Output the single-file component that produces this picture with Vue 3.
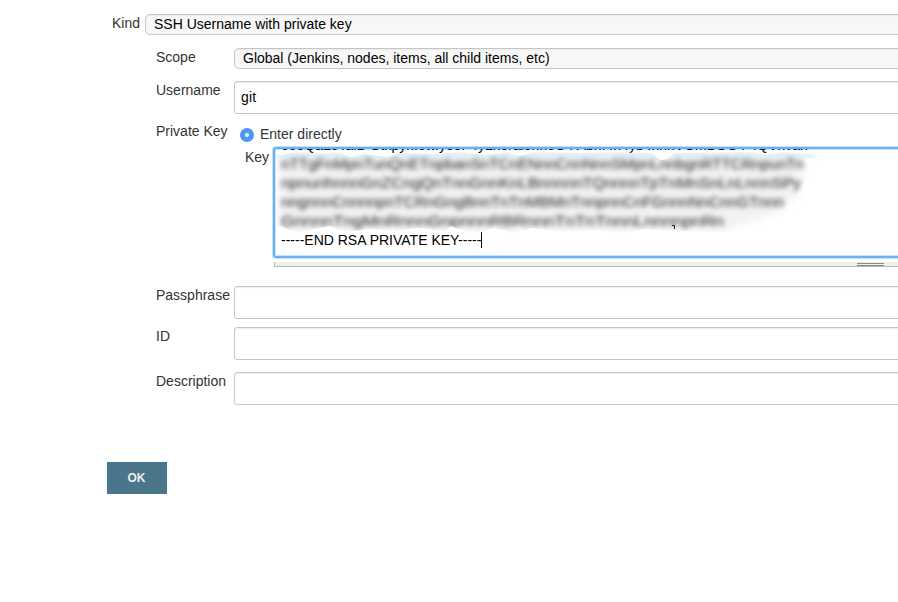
<script setup>
import { ref } from 'vue'

const username = ref('git')
const clippedLine = 'ooeQaLoTalB Otkpyn.ow.yoor 4yLnoralonnoO4 Abn.4n4yb4nnnVOmBOO4 4QVnvan'
// Placeholder lines, always shown obscured
const hiddenLines = [
  { text: 'nTTgFnMpnTunQnETnpbanSnTCnENnnCnnNnnSMpnLnnbgnRTTCRnpunTn', width: 523 },
  { text: 'npnunhnnnGnZCngQnTnnGnnKnLBnnnnnTQnnnnTpTnMnSnLnLnnnSPy', width: 520 },
  { text: 'nngnnnCnnnnpnTCRnGngBnnTnTnMBMnTnnpnnCnFGnnnNnCnnGTnnn', width: 503 },
  { text: 'GnnnnTngMnRnnnGnpnnnRBRnnnTnTnTnnnLnnnnpnRn', width: 443 },
]
</script>

<template>
  <main class="page">
    <div class="row kind">
      <label>Kind</label>
      <div class="select"><span>SSH Username with private key</span></div>
    </div>
    <div class="row scope">
      <label>Scope</label>
      <div class="select"><span>Global (Jenkins, nodes, items, all child items, etc)</span></div>
    </div>
    <div class="row username">
      <label>Username</label>
      <input v-model="username" class="field" type="text" />
    </div>
    <div class="row private">
      <label>Private Key</label>
      <div class="choice">
        <div class="option"><span class="radio"></span><span class="option-text">Enter directly</span></div>
        <div class="key-row">
          <label>Key</label>
          <div class="key-wrap">
            <div class="editor">
              <div class="line clipped">{{ clippedLine }}</div>
              <div class="hidden-block">
                <svg class="lines" width="600" height="84" viewBox="0 0 600 84" aria-hidden="true">
                  <path class="haze" d="M4 9H528L522 46L500 64L448 82H4Z" />
                  <path class="tint" d="M0 4H540V8H0Z" />
                  <text
                    v-for="(l, i) in hiddenLines"
                    :key="i"
                    x="6"
                    :y="20 + i * 19"
                    :textLength="l.width"
                    lengthAdjust="spacingAndGlyphs"
                  >{{ l.text }}</text>
                  <path class="remnant" d="M397 76.5H399.500V80" />
                </svg>
              </div>
              <div class="line last"><span>-----END RSA PRIVATE KEY-----</span><i class="caret"></i></div>
            </div>
            <div class="handle"><i></i></div>
          </div>
        </div>
      </div>
    </div>
    <div class="row passphrase">
      <label>Passphrase</label>
      <input class="field" type="text" />
    </div>
    <div class="row id">
      <label>ID</label>
      <input class="field" type="text" />
    </div>
    <div class="row description">
      <label>Description</label>
      <input class="field" type="text" />
    </div>
    <button class="ok" type="button">OK</button>
  </main>
</template>

<style>
body {
  background: #fff;
}
</style>

<style scoped>
.page {
  box-sizing: border-box;
  width: 898px;
  height: 602px;
  padding-top: 14px;
  overflow: hidden;
  font: 14px/19px "Liberation Sans", Arial, sans-serif;
  color: #333;
}
.row {
  display: flex;
  align-items: flex-start;
  margin-left: 156px;
}
.row > label {
  width: 78px;
  flex: none;
  white-space: nowrap;
}
.row.kind {
  margin-left: 112px;
}
.kind > label {
  width: 33px;
}
.select {
  box-sizing: border-box;
  height: 21px;
  flex: 1;
  margin-right: -12px;
  padding-left: 8px;
  border: 1px solid #c6c6c6;
  border-radius: 5px;
  background: #f7f7f7;
  box-shadow: inset 0 1px 1px #ececec;
  color: #000;
  white-space: nowrap;
}
.field {
  box-sizing: border-box;
  height: 33px;
  min-width: 0;
  flex: 1;
  margin: 0 -12px 0 0;
  padding: 0 6px 2px;
  border: 1px solid #c6c6c6;
  border-radius: 3px;
  outline: none;
  background: #fff;
  box-shadow: inset 0 1px 1px #eee;
  font: inherit;
  letter-spacing: 0.2px;
  color: #000;
}
.scope {
  margin-top: 13px;
}
.username {
  margin-top: 12px;
}
.private {
  height: 164px;
  margin-top: 8px;
}
.choice {
  flex: 1;
  min-width: 0;
  padding-top: 3px;
}
.option {
  display: flex;
  align-items: center;
  gap: 6px;
  height: 20px;
  padding-left: 6px;
}
.option-text {
  margin-top: -2px;
}
.radio {
  box-sizing: border-box;
  width: 14px;
  height: 14px;
  border: 5px solid #4a98fb;
  border-radius: 50%;
  background: #fff;
}
.key-row {
  display: flex;
  padding-left: 11px;
}
.key-row label {
  width: 28px;
  flex: none;
  margin-top: 3px;
}
.key-wrap {
  flex: 1;
  min-width: 0;
  margin-top: 2px;
}
.editor {
  box-sizing: border-box;
  height: 111px;
  margin-right: -12px;
  border: 2px solid #68b1f5;
  border-radius: 3px;
  box-shadow: 0 0 0 1px #c5e2fc, inset 0 0 1px 1px #c5e2fc;
  overflow: hidden;
  color: #000;
}
.line {
  height: 19px;
  padding-left: 6px;
  white-space: pre;
}
.clipped {
  margin-top: -13px;
}
.hidden-block {
  height: 76px;
}
.lines {
  display: block;
  margin-top: -6px;
  transform: translateY(-6px);
  margin: 0;
  clip-path: polygon(0 7px, 17px 4px, 32px 3px, 48px 5px, 60px 3px, 76px 8px, 90px 5px, 112px 8px, 126px 4px, 160px 5px, 184px 3px, 210px 6px, 232px 3px, 244px 7px, 260px 3px, 300px 4px, 346px 3px, 376px 4px, 386px 11px, 392px 10px, 400px 4px, 475px 3px, 491px 6px, 507px 3px, 545px 6px, 545px 80px, 437px 83px, 396px 82px, 370px 80px, 346px 84px, 322px 81px, 285px 83px, 257px 79px, 240px 84px, 218px 79px, 205px 84px, 192px 83px, 176px 77px, 170px 82px, 143px 79px, 119px 82px, 96px 80px, 70px 83px, 55px 77px, 39px 80px, 23px 85px, 7px 78px, 0 75px);
}
.lines text {
  font: 14px "Liberation Sans", Arial, sans-serif;
  fill: #222;
  filter: blur(2.9px);
}
.haze {
  fill: #f2f2f2;
  filter: blur(4px);
}
.tint {
  fill: #d3e7f6;
  filter: blur(2px);
}
.remnant {
  fill: none;
  stroke: #222;
}
.last {
  display: flex;
  align-items: center;
}
.last span {
  margin-top: -1px;
}
.caret {
  width: 1px;
  height: 16px;
  margin-top: -1px;
  background: #000;
}
.handle {
  display: flex;
  justify-content: flex-end;
  box-sizing: border-box;
  height: 5px;
  margin: 4px 0 0 1px;
  padding: 1px 14px 0 0;
  border-bottom: 1px solid #b9b9ad;
  border-left: 1px solid #b9b9ad;
  background: #eee;
}
.handle i {
  box-sizing: border-box;
  width: 27px;
  height: 3px;
  border-top: 1px solid #888;
  border-bottom: 1px solid #888;
}
.id {
  margin-top: 8px;
}
.description {
  margin-top: 12px;
}
.ok {
  display: block;
  box-sizing: border-box;
  width: 60px;
  height: 32px;
  margin: 57px 0 0 107px;
  padding: 0 1px 0 0;
  border: 1px solid #3f7893;
  border-radius: 0;
  background: #4b758b;
  font: bold 12px/30px "Liberation Sans", Arial, sans-serif;
  color: #eee;
}
</style>
